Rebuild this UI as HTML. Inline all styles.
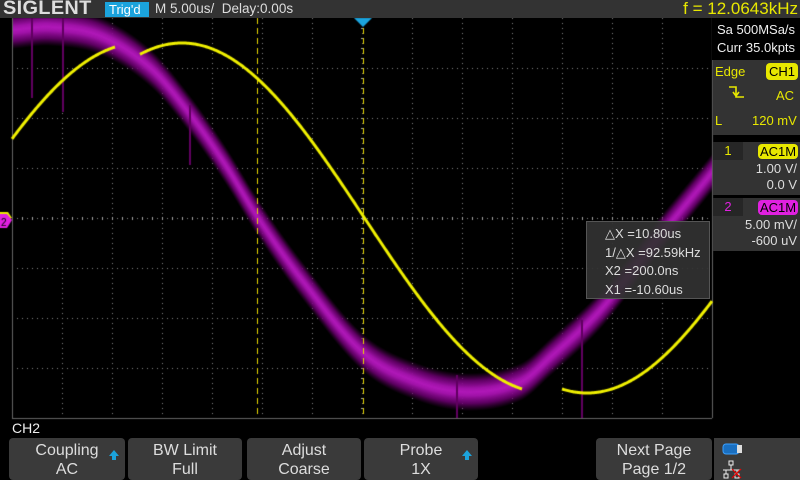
<!DOCTYPE html>
<html><head><meta charset="utf-8"><style>
*{margin:0;padding:0;box-sizing:border-box}
body{width:800px;height:480px;background:#000;overflow:hidden;position:relative;font-family:"Liberation Sans",sans-serif;color:#fff}
.a{position:absolute}
#top{left:0;top:0;width:800px;height:18px;background:#333}
.logo{left:3px;top:-2px;font-size:19px;font-weight:bold;color:#ddd;letter-spacing:0.3px;transform:scaleX(1.05);transform-origin:left}
.trig{left:105px;top:2px;width:44px;height:15px;background:#1ba3dc;color:#fff;font-size:13px;line-height:15px;padding-left:4px}
.tb{left:155px;top:1px;font-size:13.5px;color:#ddd}
.freq{right:2px;top:-1px;font-size:17px;color:#e8e800}
.rp{background:#333}
.btn{top:438px;height:42px;background:#3a3a3a;border-radius:4px;color:#ddd;font-size:16px;text-align:center;line-height:19px;padding-top:3px}
.arr{position:absolute;right:6px;top:12px;width:0;height:0;border-left:5px solid transparent;border-right:5px solid transparent;border-bottom:6px solid #1ba3dc}
.arr:after{content:"";position:absolute;left:-2px;top:6px;width:4px;height:4px;background:#1ba3dc}
.y{color:#e8e800}
</style></head><body>
<canvas id="c" width="800" height="480" class="a" style="left:0;top:0"></canvas>
<div id="top" class="a"></div>
<div class="a logo">SIGLENT</div>
<div class="a trig">Trig'd</div>
<div class="a tb">M 5.00us/&nbsp; Delay:0.00s</div>
<div class="a freq">f = 12.0643kHz</div>
<div class="a" style="left:712px;top:18px;width:88px;height:42px;background:#000;font-size:13px;color:#eee;padding:3px 0 0 5px;line-height:18px">Sa 500MSa/s<br>Curr 35.0kpts</div>
<div class="a rp" style="left:713px;top:60px;width:87px;height:75px"></div>
<div class="a y" style="left:715px;top:64px;font-size:13px">Edge</div>
<div class="a" style="left:766px;top:63px;width:32px;height:17px;background:#e8e800;border-radius:4px;color:#000;font-size:13px;text-align:center;line-height:17px">CH1</div>
<svg class="a" style="left:728px;top:85px" width="20" height="16"><path d="M1 2H8V12H16M5 7L8 11L11 7" stroke="#e8e800" stroke-width="1.6" fill="none"/></svg>
<div class="a y" style="left:776px;top:88px;font-size:13px">AC</div>
<div class="a y" style="left:715px;top:113px;font-size:13px">L</div>
<div class="a y" style="left:752px;top:113px;font-size:13px">120 mV</div>
<div class="a rp" style="left:713px;top:142px;width:87px;height:53px"></div>
<div class="a" style="left:713px;top:142px;width:30px;height:18px;background:#262626;color:#e8e800;font-size:13px;text-align:center;line-height:18px">1</div>
<div class="a" style="left:758px;top:144px;width:40px;height:15px;background:#e8e800;border-radius:4px;color:#000;font-size:13px;text-align:center;line-height:15px">AC1M</div>
<div class="a" style="right:3px;top:161px;font-size:13px;color:#ddd;text-align:right;line-height:16px">1.00 V/<br>0.0 V</div>
<div class="a rp" style="left:713px;top:198px;width:87px;height:53px"></div>
<div class="a" style="left:713px;top:198px;width:30px;height:18px;background:#262626;color:#e020e0;font-size:13px;text-align:center;line-height:18px">2</div>
<div class="a" style="left:758px;top:200px;width:40px;height:15px;background:#e020e0;border-radius:4px;color:#000;font-size:13px;text-align:center;line-height:15px">AC1M</div>
<div class="a" style="right:3px;top:217px;font-size:13px;color:#ddd;text-align:right;line-height:16px">5.00 mV/<br>-600 uV</div>
<div class="a" style="left:586px;top:221px;width:124px;height:78px;background:rgba(50,50,50,0.92);border:1px solid #555;font-size:13px;color:#ddd;line-height:18.5px;padding:3px 0 0 18px">△X =10.80us<br>1/△X =92.59kHz<br>X2 =200.0ns<br>X1 =-10.60us</div>
<div class="a" style="left:12px;top:420px;font-size:14px;color:#eee">CH2</div>
<div class="a btn" style="left:9px;width:116px">Coupling<br>AC<span class="arr"></span></div>
<div class="a btn" style="left:128px;width:114px">BW Limit<br>Full</div>
<div class="a btn" style="left:247px;width:114px">Adjust<br>Coarse</div>
<div class="a btn" style="left:364px;width:114px">Probe<br>1X<span class="arr"></span></div>
<div class="a btn" style="left:596px;width:116px">Next Page<br>Page 1/2</div>
<div class="a" style="left:714px;top:438px;width:86px;height:42px;background:#3a3a3a"></div>
<svg class="a" style="left:720px;top:441px" width="30" height="38"><rect x="3" y="3" width="16" height="10" rx="3" fill="#1a6fc0" stroke="#3aa0ff"/><rect x="17" y="4" width="5" height="8" fill="#ddd"/><g stroke="#eee" fill="none"><rect x="9" y="20" width="4" height="4"/><path d="M11 24V29M3 29H20M6 29V33M17 29V33"/><rect x="4" y="33" width="4" height="4"/><rect x="15" y="33" width="4" height="4"/></g><path d="M12 28L21 37M21 28L12 37" stroke="#e00" stroke-width="1.2"/></svg>
<script>
const c=document.getElementById('c').getContext('2d');
const L=12,T=18,R=712,B=418;
c.fillStyle='#000';c.fillRect(0,0,800,480);
c.fillStyle='#888';
for(let i=1;i<14;i++){let x=L+i*50;for(let y=T;y<B;y+=5)c.fillRect(x,y,1,1);}
for(let j=1;j<8;j++){let y=T+j*50;for(let x=L;x<R;x+=5)c.fillRect(x,y,1,1);}
c.fillStyle='#aaa';
for(let x=L;x<R;x+=10)c.fillRect(x,217,1,3);
for(let y=T;y<B;y+=10)c.fillRect(361,y,3,1);
c.fillStyle='#666';c.fillRect(L,T,1,B-T);c.fillRect(L,B,R-L,1);c.fillRect(R,T,1,B-T);
c.save();c.beginPath();c.rect(L+1,T,R-L-1,B-T);c.clip();
const P=[[0,30],[12,30],[50,27],[100,36],[150,68],[190,115],[225,165],[257,217],[300,278],[363,353],[420,383],[470,392],[520,382],[550,357],[600,310],[650,247],[712,172],[760,110]];
function py(x){for(let i=0;i<P.length-1;i++){let a=P[i],b=P[i+1];if(x>=a[0]&&x<=b[0]){let t=(x-a[0])/(b[0]-a[0]);
 let p0=P[Math.max(0,i-1)],p3=P[Math.min(P.length-1,i+2)];
 let m1=(b[1]-p0[1])/(b[0]-p0[0])*(b[0]-a[0]),m2=(p3[1]-a[1])/(p3[0]-a[0])*(b[0]-a[0]);
 let t2=t*t,t3=t2*t;return (2*t3-3*t2+1)*a[1]+(t3-2*t2+t)*m1+(-2*t3+3*t2)*b[1]+(t3-t2)*m2;}}return 200;}
for(let x=L+1;x<R;x++){
 let y=py(x);
 let g=c.createLinearGradient(0,y-19,0,y+19);
 g.addColorStop(0,'rgba(90,0,90,0)');g.addColorStop(0.2,'rgba(110,0,115,0.85)');g.addColorStop(0.4,'#a012a8');g.addColorStop(0.5,'#b018b8');g.addColorStop(0.6,'#a012a8');g.addColorStop(0.8,'rgba(110,0,115,0.85)');g.addColorStop(1,'rgba(90,0,90,0)');
 c.fillStyle=g;c.fillRect(x,y-19,1,38);
}
c.fillStyle='#600060';
[[31,18,98],[62,18,112],[189,105,165],[456,375,418],[581,320,418]].forEach(a=>c.fillRect(a[0],a[1],2,a[2]-a[1]));
c.restore();
c.strokeStyle='#e8d800';c.lineWidth=1;c.setLineDash([6,4]);
[[257.5],[363.5]].forEach(a=>{c.beginPath();c.moveTo(a[0],T);c.lineTo(a[0],B);c.stroke();});
c.setLineDash([]);
c.strokeStyle='#f0f000';c.lineWidth=3;
function yy(x){return 218-175*Math.cos(2*Math.PI*(x-182)/730);}
function seg(a,b,off){c.beginPath();for(let x=a;x<=b;x++){let y=yy(x+off);x==a?c.moveTo(x,y):c.lineTo(x,y);}c.stroke();}
seg(12,115,42);seg(140,522,0);seg(562,712,-40);
c.fillStyle='#1ba3dc';c.beginPath();c.moveTo(354,18);c.lineTo(372,18);c.lineTo(363,27);c.fill();
c.fillStyle='#e8e800';c.beginPath();c.moveTo(0,212);c.lineTo(8,212);c.lineTo(12,218);c.lineTo(0,222);c.fill();
c.fillStyle='#e020e0';c.beginPath();c.moveTo(0,214);c.lineTo(7,214);c.lineTo(12,220);c.lineTo(7,228);c.lineTo(0,228);c.fill();
c.fillStyle='#000';c.font='10px Liberation Sans';c.fillText('2',1,226);
</script>
</body></html>
